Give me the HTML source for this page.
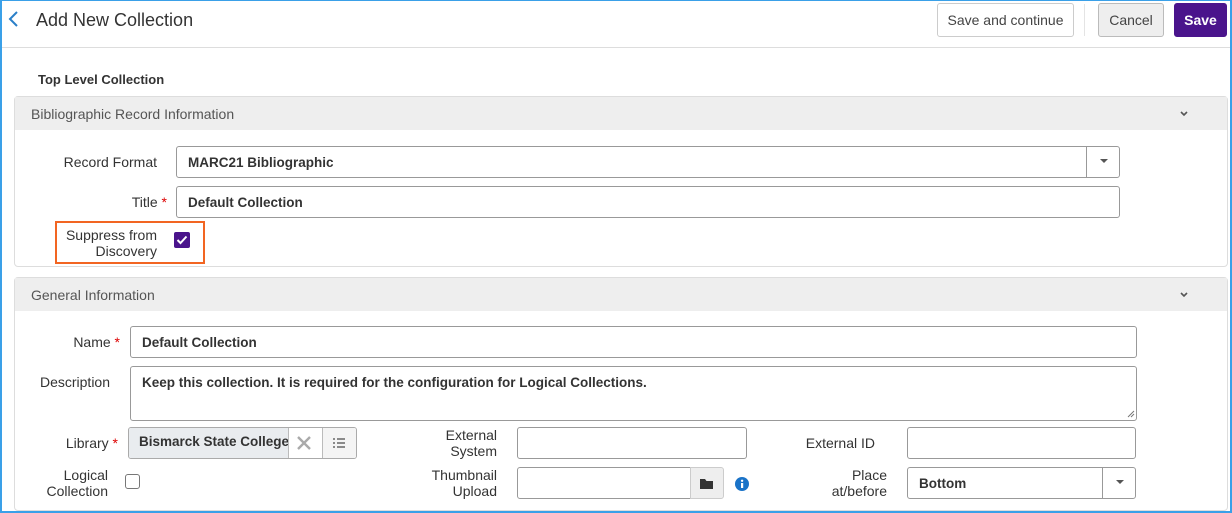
<!DOCTYPE html>
<html><head><style>
*{box-sizing:border-box;margin:0;padding:0}
body{width:1232px;height:513px;overflow:hidden;background:#fff;font-family:"Liberation Sans",sans-serif;color:#333;font-size:14px;position:relative}
.a{position:absolute}
.frame{left:0;top:0;width:1232px;height:513px;border:2px solid #3aa0e8;border-top-width:1px}
.btn{position:absolute;border:1px solid #ccc;border-radius:3px;font-size:14px;display:flex;align-items:center;justify-content:center;color:#444}
.panel{position:absolute;left:14px;width:1214px;border:1px solid #ddd;border-radius:4px}
.ph{height:33px;background:#eee;font-size:14px;color:#555;padding:9px 0 0 16px;position:relative}
.ph .ch{position:absolute;right:38px;top:12px}
.lbl{position:absolute;font-size:14px;color:#333;text-align:right;line-height:16px}
.in{position:absolute;border:1px solid #999;border-radius:3px;background:#fff;font-weight:bold;font-size:13.5px;padding-left:11px;display:flex;align-items:center;color:#333}
.req{color:#d00}
</style></head><body>
<div class="a frame"></div>
<svg class="a" style="left:6px;top:10px" width="14" height="18"><path d="M11 2 L4 9 L11 16" stroke="#2a7fc8" stroke-width="2" fill="none"/></svg>
<div class="a" style="left:36px;top:10px;font-size:18px;color:#333">Add New Collection</div>
<div class="a" style="left:2px;top:47px;width:1228px;height:1px;background:#ddd"></div>
<div class="btn" style="left:937px;top:3px;width:137px;height:34px;background:#fff">Save and continue</div>
<div class="a" style="left:1084px;top:4px;width:1px;height:32px;background:#e4e4e4"></div>
<div class="btn" style="left:1098px;top:3px;width:66px;height:34px;background:#eee;border-color:#bbb">Cancel</div>
<div class="btn" style="left:1174px;top:3px;width:53px;height:34px;background:#4a148c;border-color:#4a148c;color:#fff;font-weight:bold">Save</div>
<div class="a" style="left:38px;top:72px;font-size:13px;font-weight:bold">Top Level Collection</div>

<div class="panel" style="top:96px;height:171px">
<div class="ph">Bibliographic Record Information<svg class="ch" width="10" height="10"><path d="M2 3 L5 6 L8 3" stroke="#555" stroke-width="1.6" fill="none"/></svg></div>
</div>
<div class="lbl" style="left:40px;top:154px;width:117px">Record Format</div>
<div class="in" style="left:176px;top:146px;width:944px;height:32px">MARC21 Bibliographic</div>
<div class="a" style="left:1086px;top:147px;width:1px;height:30px;background:#999"></div>
<svg class="a" style="left:1099px;top:158px" width="10" height="6"><path d="M1 1 L9 1 L5 5Z" fill="#555"/></svg>
<div class="lbl" style="left:40px;top:194px;width:127px">Title <span class="req">*</span></div>
<div class="in" style="left:176px;top:186px;width:944px;height:32px">Default Collection</div>
<div class="a" style="left:55px;top:221px;width:150px;height:43px;border:2px solid #f26522"></div>
<div class="lbl" style="left:58px;top:227px;width:99px">Suppress from<br>Discovery</div>
<div class="a" style="left:174px;top:232px;width:16px;height:16px;background:#4a148c;border-radius:2px"></div>
<svg class="a" style="left:174px;top:232px" width="16" height="16"><path d="M3.5 8 L6.5 11 L12.5 4.5" stroke="#fff" stroke-width="2" fill="none"/></svg>

<div class="panel" style="top:277px;height:234px">
<div class="ph">General Information<svg class="ch" width="10" height="10"><path d="M2 3 L5 6 L8 3" stroke="#555" stroke-width="1.6" fill="none"/></svg></div>
</div>
<div class="lbl" style="left:30px;top:334px;width:90px">Name <span class="req">*</span></div>
<div class="in" style="left:130px;top:326px;width:1007px;height:32px">Default Collection</div>
<div class="lbl" style="left:20px;top:374px;width:90px">Description</div>
<div class="in" style="left:130px;top:366px;width:1007px;height:55px;align-items:flex-start;padding-top:8px">Keep this collection. It is required for the configuration for Logical Collections.</div>
<svg class="a" style="left:1127px;top:410px" width="8" height="8"><path d="M7 1 L1 7 M7 4 L4 7" stroke="#777"/></svg>
<div class="lbl" style="left:30px;top:435px;width:88px">Library <span class="req">*</span></div>
<div class="a" style="left:128px;top:427px;width:229px;height:32px;border:1px solid #aaa;border-radius:3px;overflow:hidden;background:#fff">
<div class="a" style="left:0;top:0;width:159px;height:30px;background:#e9ecef;font-weight:bold;font-size:13.5px;padding:6px 0 0 10px;white-space:nowrap;overflow:hidden">Bismarck State College</div>
<div class="a" style="left:159px;top:0;width:1px;height:30px;background:#bbb"></div>
<svg class="a" style="left:168px;top:8px" width="14" height="14"><path d="M1 1 L13 13 M13 1 L1 13" stroke="#aaa" stroke-width="2.4"/></svg>
<div class="a" style="left:193px;top:0;width:1px;height:30px;background:#bbb"></div>
<div class="a" style="left:194px;top:0;width:35px;height:30px;background:#f4f4f4"></div>
<svg class="a" style="left:203px;top:9px" width="14" height="12"><path d="M1 2h2M5 2h8M1 6h2M5 6h8M1 10h2M5 10h8" stroke="#666" stroke-width="1.5"/></svg>
</div>
<div class="lbl" style="left:400px;top:427px;width:97px">External<br>System</div>
<div class="in" style="left:517px;top:427px;width:230px;height:32px"></div>
<div class="lbl" style="left:780px;top:435px;width:95px">External ID</div>
<div class="in" style="left:907px;top:427px;width:229px;height:32px"></div>
<div class="lbl" style="left:20px;top:467px;width:88px">Logical<br>Collection</div>
<div class="a" style="left:125px;top:474px;width:15px;height:15px;border:1px solid #777;border-radius:3px"></div>
<div class="lbl" style="left:400px;top:467px;width:97px">Thumbnail<br>Upload</div>
<div class="in" style="left:517px;top:467px;width:174px;height:32px;border-radius:3px 0 0 3px"></div>
<div class="a" style="left:690px;top:467px;width:34px;height:32px;background:#eee;border:1px solid #ccc;border-radius:0 3px 3px 0"></div>
<svg class="a" style="left:699px;top:478px" width="15" height="12"><path d="M1 1h5l1.5 2H14v8H1Z" fill="#333"/></svg>
<svg class="a" style="left:735px;top:477px" width="14" height="14"><circle cx="7" cy="7" r="7" fill="#1a73c8"/><rect x="6" y="6" width="2.2" height="5" fill="#fff"/><circle cx="7.1" cy="3.8" r="1.2" fill="#fff"/></svg>
<div class="lbl" style="left:780px;top:467px;width:107px">Place<br>at/before</div>
<div class="in" style="left:907px;top:467px;width:229px;height:32px">Bottom</div>
<div class="a" style="left:1102px;top:468px;width:1px;height:30px;background:#999"></div>
<svg class="a" style="left:1115px;top:479px" width="10" height="6"><path d="M1 1 L9 1 L5 5Z" fill="#555"/></svg>
</body></html>
